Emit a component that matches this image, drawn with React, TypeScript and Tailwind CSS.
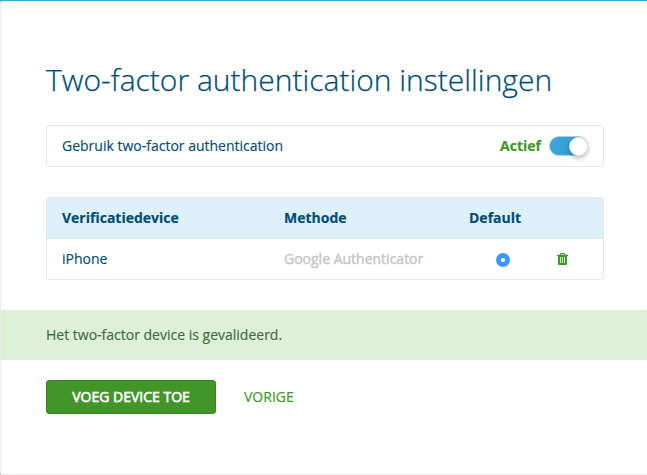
function TrashIcon() {
  return (
    <svg width="11" height="12" viewBox="0 0 11 12" fill="none">
      <path d="M3.5 2V.8q0-.3.3-.3h3.4q.3 0 .3.3V2" stroke="#429628" />
      <path fill="#429628" d="M0 1.7h11v1.3H0z" />
      <path fill="#429628" d="M1 3h9v8q0 1-1 1H2q-1 0-1-1z" />
      <path fill="#d3e7cd" d="M3 4h1v6H3zM5 4h1v6H5zM7 4h1v6H7z" />
    </svg>
  );
}

function Toggle() {
  return (
    <span className="flex h-5 w-[39px] items-center justify-end rounded-full border border-[#b9cdd6] bg-[#36a3d9]">
      <i className="-mr-px size-[19px] shrink-0 rounded-full border border-[#e6edf0] bg-white shadow-[0_2px_5px_rgba(0,0,0,0.3)]" />
    </span>
  );
}

export default function App() {
  return (
    <div className="h-[475px] w-[647px] overflow-hidden bg-[#36a3d9] pt-px">
      <main className="h-[474px] rounded-l-[2px] border-b border-l border-[#ebebeb] bg-white font-['Open_Sans',sans-serif] text-sm text-[#004b76] shadow-[inset_0_1px_1px_#eeeeee] [-webkit-text-stroke:0.15px_currentColor]">
        <h1 className="pt-[58px] pl-[45px] text-[30px] leading-[42px] font-light whitespace-nowrap [-webkit-text-stroke:0.25px_currentColor]">Two-factor authentication instellingen</h1>
        <section className="mt-6 ml-[45px] flex h-[42px] w-[558px] items-center justify-between rounded-[3px] border border-[#e6e6e6] px-[15px]">
          <span>Gebruik two-factor authentication</span>
          <div className="flex items-center gap-2">
            <b className="text-[#429628]">Actief</b>
            <Toggle />
          </div>
        </section>
        <section className="mt-[30px] ml-[45px] h-[83px] w-[558px] overflow-hidden rounded-[3px] border border-[#e6e6e6]">
          <div className="grid h-[41px] grid-cols-[222px_185px_1fr] items-center border-b border-[#e6e6e6] bg-[#ddf1fa] pl-[15px] font-bold">
            <span>Verificatiedevice</span>
            <span>Methode</span>
            <span>Default</span>
          </div>
          <div className="grid h-[40px] grid-cols-[222px_212px_61px_1fr] items-center pl-[15px]">
            <span>iPhone</span>
            <span className="text-[#c8c8c8] [-webkit-text-stroke:0.5px_currentColor]">Google Authenticator</span>
            <span className="mt-[2px] flex size-[14px] items-center justify-center rounded-full bg-[#3b99fc]">
              <i className="size-1 rounded-full bg-white" />
            </span>
            <TrashIcon />
          </div>
        </section>
        <p className="mt-[30px] flex h-[50px] items-center bg-[#dff0d8] pl-[45px] text-[#3c6e3d]">Het two-factor device is gevalideerd.</p>
        <div className="mt-5 flex items-center pl-[45px]">
          <button className="h-[34px] w-[170px] rounded-[3px] border border-[#388322] bg-[#429628] text-white [-webkit-text-stroke:0.6px_currentColor]">VOEG DEVICE TOE</button>
          <a className="ml-7 text-[#429628]">VORIGE</a>
        </div>
      </main>
    </div>
  );
}
